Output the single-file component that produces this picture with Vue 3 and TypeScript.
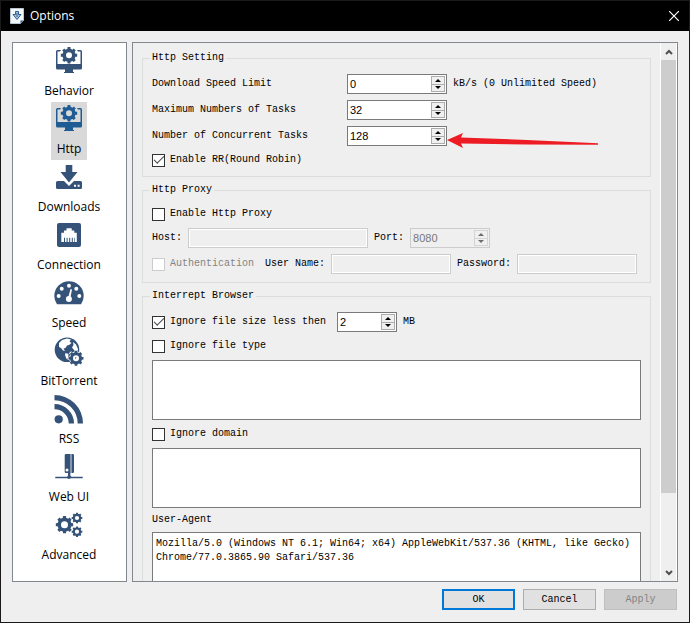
<script setup lang="ts">
import { ref } from 'vue'

interface Page {
  name: string
  icon: string
}

const pages: Page[] = [
  { name: 'Behavior', icon: 'monitor' },
  { name: 'Http', icon: 'monitor' },
  { name: 'Downloads', icon: 'download' },
  { name: 'Connection', icon: 'port' },
  { name: 'Speed', icon: 'gauge' },
  { name: 'BitTorrent', icon: 'globe' },
  { name: 'RSS', icon: 'rss' },
  { name: 'Web UI', icon: 'server' },
  { name: 'Advanced', icon: 'gears' },
]

const current = ref('Http')
const speedLimit = ref(0)
const maxTasks = ref(32)
const concurrent = ref(128)
const roundRobin = ref(true)
const useProxy = ref(false)
const host = ref('')
const port = ref(8080)
const auth = ref(false)
const user = ref('')
const password = ref('')
const ignoreSize = ref(true)
const minSize = ref(2)
const ignoreType = ref(false)
const types = ref('')
const ignoreDomain = ref(false)
const domains = ref('')
const userAgent = ref(
  'Mozilla/5.0 (Windows NT 6.1; Win64; x64) AppleWebKit/537.36 (KHTML, like Gecko) Chrome/77.0.3865.90 Safari/537.36',
)

/** Builds a toothed wheel with a round hole, for an even-odd fill. */
function gear(cx: number, cy: number, r: number, hole: number, teeth = 8): string {
  const root = r * 0.8
  const step = (Math.PI * 2) / teeth
  const pts: string[] = []
  const put = (radius: number, angle: number) =>
    pts.push(`${(cx + radius * Math.sin(angle)).toFixed(2)} ${(cy - radius * Math.cos(angle)).toFixed(2)}`)
  for (let i = 0; i < teeth; i++) {
    const a = i * step
    put(root, a - step * 0.3)
    put(r, a - step * 0.22)
    put(r, a + step * 0.22)
    put(root, a + step * 0.3)
  }
  return `M${pts.join('L')}ZM${cx - hole} ${cy}a${hole} ${hole} 0 1 0 ${hole * 2} 0a${hole} ${hole} 0 1 0 ${-hole * 2} 0Z`
}
</script>

<template>
  <div class="window">
    <header class="titlebar">
      <svg class="app-icon" viewBox="0 0 14 16" aria-hidden="true">
        <path d="M0.500 0.500H13.500V12.500L10.500 15.500H0.500Z" fill="#f4f7fa" stroke="#b9c6d4" />
        <path d="M13.500 12.500H10.500V15.500Z" fill="#2f5479" />
        <path d="M5.500 3.500H8.500V6.500H11L7 11.500L3 6.500H5.500Z" fill="#a9c3dc" stroke="#2f5f93" />
        <path d="M7 5V9" stroke="#2f5f93" />
      </svg>
      <h1 class="title">Options</h1>
      <button class="close" type="button" aria-label="Close">
        <svg viewBox="0 0 10 10"><path d="M0 0L10 10M10 0L0 10" stroke="#fff" stroke-width="1.2" /></svg>
      </button>
    </header>

    <div class="body">
      <nav class="sidebar">
        <button
          v-for="p in pages"
          :key="p.name"
          type="button"
          class="page"
          :class="{ selected: p.name === current }"
          @click="current = p.name"
        >
          <svg class="page-icon" viewBox="0 0 32 32" fill="currentColor" fill-rule="evenodd" aria-hidden="true">
            <template v-if="p.icon === 'monitor'">
              <path d="M4.500 6H8L7 7.500H4.500V20H27.500V7.500H25L24 6H27.500Q29 6 29 7.500V24Q29 25.500 27.500 25.500H20V28H21V29H11V28H12V25.500H4.500Q3 25.500 3 24V7.500Q3 6 4.500 6Z" />
              <path :d="gear(16, 11.3, 8.3, 3)" />
            </template>
            <template v-else-if="p.icon === 'download'">
              <path d="M12.700 5H19.300V12H24.500L16 22.500L7.500 12H12.700Z" />
              <path d="M4.500 21H11L16 26L21 21H27.500Q29 21 29 22.500V27.500Q29 29 27.500 29H4.500Q3 29 3 27.500V22.500Q3 21 4.500 21ZM21 24.700V26.700H23V24.700ZM24.600 24.700V26.700H26.600V24.700Z" />
            </template>
            <template v-else-if="p.icon === 'port'">
              <path d="M6 5H26Q28 5 28 7V27Q28 29 26 29H6Q4 29 4 27V7Q4 5 6 5ZM13.500 10.300V12.600H11V14.800H8.300V24H11V19.700H12V24H13.600V19.700H14.600V24H16.200V19.700H17.200V24H18.800V19.700H19.800V24H21.400V19.700H22V24H23.800V14.800H21.300V12.600H18.700V10.300Z" />
            </template>
            <template v-else-if="p.icon === 'gauge'">
              <path d="M4 28.300Q1.300 24.500 1.300 20A14.700 14.700 0 0 1 30.700 20Q30.700 24.500 28 28.300Z" />
              <g fill="#fff">
                <circle cx="5.700" cy="20" r="2" />
                <circle cx="8.700" cy="12.800" r="2" />
                <circle cx="16" cy="9.800" r="2" />
                <circle cx="23.300" cy="12.800" r="2" />
                <circle cx="26.300" cy="20" r="2" />
                <circle cx="15.900" cy="23" r="3" />
                <path d="M17.500 13L19 13.400L17.200 23H14.800Z" />
              </g>
            </template>
            <template v-else-if="p.icon === 'globe'">
              <circle cx="14" cy="15.700" r="12.300" />
              <path
                d="M6 9L9 6L14 4.600L18 5.500L16.500 7.500L18.500 9L16 11L14 11.500L12.500 14L10.500 14.500L12 17L10 16.500L8 14L6 13ZM20 8L23 10.500L25 15L24.500 17L21 16L19 13.500L20.500 11ZM12.500 19L15.500 20L15 24L13.500 25L12 21Z"
                fill="#fff"
              />
              <path :d="gear(23, 24.3, 8.6, 1)" fill="#fff" />
              <path :d="gear(23, 24.3, 7.6, 3)" />
            </template>
            <template v-else-if="p.icon === 'rss'">
              <circle cx="5.700" cy="27.300" r="4.100" />
              <path d="M1.500 3A28.500 28.500 0 0 1 30 31.500H24.700A23.200 23.200 0 0 0 1.500 8.300ZM1.500 12A19.500 19.500 0 0 1 21 31.500H15.700A14.200 14.200 0 0 0 1.500 17.300Z" />
            </template>
            <template v-else-if="p.icon === 'server'">
              <path d="M13 4H17.600V23H13Q11.700 23 11.700 21.700V5.300Q11.700 4 13 4ZM14 18.400A1.500 1.500 0 1 0 14 21.400A1.500 1.500 0 1 0 14 18.400Z" />
              <path d="M18.400 4H19.700Q21 4 21 5.300V21.700Q21 23 19.700 23H18.400Z" />
              <path d="M15 23H17.400V25.700L18.500 26.700H29.700V28.200H18L16 29L14 28.200H2.300V26.700H14L15 25.700Z" />
            </template>
            <template v-else>
              <path :d="gear(11.5, 16.7, 8.8, 3.5)" />
              <path :d="gear(24, 10, 5.4, 2.1)" />
              <path :d="gear(24, 23.7, 5.4, 2.1)" />
            </template>
          </svg>
          <span class="page-name">{{ p.name }}</span>
        </button>
      </nav>

      <main class="panel">
        <form class="content" @submit.prevent>
          <fieldset>
            <legend>Http Setting</legend>
            <div class="rows">
              <div class="row">
                <label class="wide" for="speed">Download Speed Limit</label>
                <span class="spin"><input id="speed" v-model="speedLimit" type="number" /><span class="steps"><button type="button" class="up" aria-label="Increase" @click="speedLimit++" /><button type="button" class="down" aria-label="Decrease" @click="speedLimit--" /></span></span>
                <span>kB/s (0 Unlimited Speed)</span>
              </div>
              <div class="row">
                <label class="wide" for="max">Maximum Numbers of Tasks</label>
                <span class="spin"><input id="max" v-model="maxTasks" type="number" /><span class="steps"><button type="button" class="up" aria-label="Increase" @click="maxTasks++" /><button type="button" class="down" aria-label="Decrease" @click="maxTasks--" /></span></span>
              </div>
              <div class="row">
                <label class="wide" for="conc">Number of Concurrent Tasks</label>
                <span class="spin"><input id="conc" v-model="concurrent" type="number" /><span class="steps"><button type="button" class="up" aria-label="Increase" @click="concurrent++" /><button type="button" class="down" aria-label="Decrease" @click="concurrent--" /></span>
                  <svg class="arrow" viewBox="0 0 152 16" aria-hidden="true">
                    <path d="M0 7L16 0L14 4.500L80 7L151 10.300V11.800L80 11.500L14 10.500L16 15Z" fill="#ed1c24" />
                  </svg>
                </span>
              </div>
              <label class="check"><input v-model="roundRobin" type="checkbox" />Enable RR(Round Robin)</label>
            </div>
          </fieldset>

          <fieldset>
            <legend>Http Proxy</legend>
            <div class="rows">
              <label class="check"><input v-model="useProxy" type="checkbox" />Enable Http Proxy</label>
              <div class="row">
                <label for="host">Host:</label>
                <input id="host" v-model="host" class="text host" type="text" disabled />
                <label for="port">Port:</label>
                <span class="spin medium off"><input id="port" v-model="port" type="number" disabled /><span class="steps"><button type="button" class="up" aria-label="Increase" disabled /><button type="button" class="down" aria-label="Decrease" disabled /></span></span>
              </div>
              <div class="row">
                <label class="check off"><input v-model="auth" type="checkbox" disabled />Authentication</label>
                <label for="user">User Name:</label>
                <input id="user" v-model="user" class="text" type="text" disabled />
                <label for="pass">Password:</label>
                <input id="pass" v-model="password" class="text" type="password" disabled />
              </div>
            </div>
          </fieldset>

          <fieldset>
            <legend>Interrept Browser</legend>
            <div class="rows">
              <div class="row">
                <label class="check"><input v-model="ignoreSize" type="checkbox" />Ignore file size less then</label>
                <span class="spin small"><input v-model="minSize" type="number" aria-label="Minimum file size" /><span class="steps"><button type="button" class="up" aria-label="Increase" @click="minSize++" /><button type="button" class="down" aria-label="Decrease" @click="minSize--" /></span></span>
                <span>MB</span>
              </div>
              <label class="check"><input v-model="ignoreType" type="checkbox" />Ignore file type</label>
              <textarea v-model="types" aria-label="Ignored file types" />
              <label class="check"><input v-model="ignoreDomain" type="checkbox" />Ignore domain</label>
              <textarea v-model="domains" aria-label="Ignored domains" />
              <label for="agent">User-Agent</label>
              <textarea id="agent" v-model="userAgent" spellcheck="false" />
            </div>
          </fieldset>
        </form>

        <div class="scrollbar">
          <button type="button" aria-label="Scroll up">
            <svg viewBox="0 0 8 6"><path d="M1 5L4 2L7 5" fill="none" stroke="#505050" stroke-width="2" /></svg>
          </button>
          <div class="track"><div class="thumb" /></div>
          <button type="button" aria-label="Scroll down">
            <svg viewBox="0 0 8 6"><path d="M1 1L4 4L7 1" fill="none" stroke="#505050" stroke-width="2" /></svg>
          </button>
        </div>
      </main>
    </div>

    <footer class="actions">
      <button type="button" class="default">OK</button>
      <button type="button">Cancel</button>
      <button type="button" disabled>Apply</button>
    </footer>
  </div>
</template>

<style>
body {
  margin: 0;
}
</style>

<style scoped>
* {
  box-sizing: border-box;
}
.window {
  display: flex;
  flex-direction: column;
  height: 100vh;
  border: 1px solid #1a1a1a;
  background: #efefef;
  color: #000;
  font-family: "Liberation Mono", "DejaVu Sans Mono", monospace;
  font-size: 10px;
  line-height: 12px;
}
button,
input,
textarea {
  margin: 0;
  padding: 0;
  border: 0;
  border-radius: 0;
  font: inherit;
  color: inherit;
  outline: 0;
}
.titlebar {
  display: flex;
  align-items: center;
  flex: none;
  height: 30px;
  padding: 0 10px 0 9px;
  background: #000;
  color: #fff;
}
.app-icon {
  width: 14px;
  height: 16px;
}
.title {
  flex: 1;
  margin: 0 0 0 6px;
  font: 12px/16px "Open Sans", "Noto Sans", sans-serif;
}
.close {
  display: flex;
  background: none;
}
.close svg {
  width: 10px;
  height: 10px;
}
.body {
  display: flex;
  flex: 1;
  gap: 5px;
  min-height: 0;
  padding: 11px 11px 0;
}
.sidebar {
  display: flex;
  flex-direction: column;
  align-items: center;
  flex: none;
  width: 115px;
  padding: 1px 1px 0 0;
  border: 1px solid #828790;
  background: #fff;
}
.page {
  display: flex;
  flex-direction: column;
  align-items: center;
  gap: 7px;
  padding: 0 2px 3px;
  background: none;
  font: 12px/16px "Open Sans", "Noto Sans", sans-serif;
}
.selected {
  background: #d9d9d9;
}
.page-icon {
  width: 32px;
  height: 32px;
  color: #355378;
}
.selected .page-icon {
  color: #205c94;
}
.panel {
  display: flex;
  flex: 1;
  min-width: 0;
  border: 1px solid #828790;
}
.content {
  display: flex;
  flex-direction: column;
  flex: 1;
  gap: 7px;
  min-width: 0;
  padding: 9px 9px 0;
  overflow: hidden;
}
fieldset {
  flex: none;
  min-width: 0;
  margin: 0;
  padding: 0 9px 8px;
  border: 1px solid #dcdcdc;
}
legend {
  margin-left: -2px;
  padding: 0 2px;
}
.rows {
  display: flex;
  flex-direction: column;
  gap: 6px;
  padding-top: 10px;
}
.row {
  display: flex;
  align-items: center;
  gap: 6px;
  height: 20px;
  white-space: nowrap;
}
.wide {
  width: 189px;
}
.spin {
  position: relative;
  display: flex;
  width: 100px;
  height: 20px;
  padding: 1px;
  border: 1px solid #7a7a7a;
  background: #fff;
}
.spin.medium {
  width: 80px;
}
.spin.small {
  width: 60px;
}
.spin input {
  flex: 1;
  min-width: 0;
  padding-left: 1px;
  background: none;
  font: 11px/16px "Liberation Sans", Roboto, sans-serif;
  appearance: textfield;
}
.spin input::-webkit-inner-spin-button {
  display: none;
}
.steps {
  display: flex;
  flex-direction: column;
  width: 14px;
}
.steps button {
  display: flex;
  align-items: center;
  justify-content: center;
  flex: 1;
  border: 1px solid #acacac;
  background: #f0f0f0;
}
.steps .down {
  border-top: 0;
}
.steps button::before {
  content: "";
  border: 3px solid transparent;
}
.steps .up::before {
  border-top: 0;
  border-bottom-color: #000;
}
.steps .down::before {
  border-bottom: 0;
  border-top-color: #000;
}
.spin.off {
  border-color: #ccc;
  background: #efefef;
  color: #787878;
}
.off .steps button {
  border-color: #d4d4d4;
}
.off .steps .up::before {
  border-bottom-color: #6d6d6d;
}
.off .steps .down::before {
  border-top-color: #6d6d6d;
}
.arrow {
  position: absolute;
  top: 6px;
  left: 99px;
  width: 152px;
  height: 16px;
}
.text {
  width: 120px;
  height: 20px;
  padding: 0 2px;
  border: 1px solid #ccc;
  background: #efefef;
  box-shadow: inset 0 0 0 1px #fff;
}
.host {
  width: 180px;
}
.check {
  display: flex;
  align-items: center;
  gap: 5px;
  height: 16px;
  padding-right: 5px;
}
.check.off {
  color: #838383;
}
.check input {
  display: grid;
  place-items: center;
  width: 13px;
  height: 13px;
  border: 1px solid #333;
  background: #fff;
  appearance: none;
}
.check.off input {
  border-color: #ccc;
}
.check input:checked::before {
  content: "";
  width: 9px;
  height: 4px;
  margin-top: -3px;
  border: solid #4a4a4a;
  border-width: 0 0 1px 1px;
  transform: rotate(-45deg);
}
textarea {
  display: block;
  width: 100%;
  height: 60px;
  padding: 4px 3px;
  border: 1px solid #7a7a7a;
  background: #fff;
  line-height: 14px;
  resize: none;
  overflow: hidden;
}
.scrollbar {
  display: flex;
  flex-direction: column;
  flex: none;
  width: 17px;
  border: solid #fff;
  border-width: 0 1px;
}
.scrollbar button {
  display: flex;
  align-items: center;
  justify-content: center;
  height: 17px;
  background: none;
}
.scrollbar svg {
  width: 8px;
  height: 6px;
}
.track {
  flex: 1;
}
.thumb {
  height: 86%;
  background: #cdcdcd;
}
.actions {
  display: flex;
  justify-content: flex-end;
  flex: none;
  gap: 8px;
  padding: 7px 12px 12px;
}
.actions button {
  width: 73px;
  height: 21px;
  border: 1px solid #adadad;
  background: #e1e1e1;
}
.actions .default {
  border: 2px solid #0078d7;
}
.actions button:disabled {
  border-color: #bfbfbf;
  background: #ccc;
  color: #838383;
}
</style>
